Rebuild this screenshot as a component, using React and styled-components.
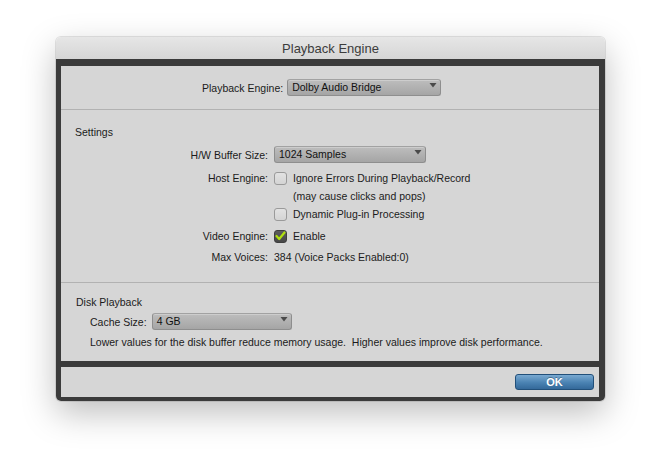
import React from 'react';
import styled, { createGlobalStyle } from 'styled-components';

const GlobalStyle = createGlobalStyle`
  html, body {
    margin: 0;
    padding: 0;
    background: #ffffff;
  }

  body {
    font-family: "Liberation Sans", Arial, sans-serif;
    font-size: 10.5px;
    color: #1b1b1b;
  }
`;

const Page = styled.div`
  width: 662px;
  height: 476px;
  padding: 37px 0 0 56px;
  box-sizing: border-box;
`;

const Window = styled.div`
  width: 549px;
  border-radius: 5px;
  overflow: hidden;
  box-shadow: 0 12px 34px rgba(0, 0, 0, 0.26), 0 0 0 1px rgba(0, 0, 0, 0.1);
`;

const TitleBar = styled.div`
  height: 22px;
  display: flex;
  align-items: center;
  justify-content: center;
  background: linear-gradient(#e6e6e6, #d6d6d6);
  font-size: 13px;
  color: #3c3c3c;
`;

const Frame = styled.div`
  background: #3b3b3b;
  padding: 7px 6px 4px 5px;
  display: flex;
  flex-direction: column;
  gap: 6px;
`;

const Panel = styled.div`
  background: #d6d6d6;
  height: ${(p) => p.$height}px;
  box-sizing: border-box;
`;

const Section = styled.div`
  padding: ${(p) => p.$pad};
  border-bottom: ${(p) => (p.$divider ? '1px solid #b2b2b2' : 'none')};
`;

const EngineRow = styled.div`
  display: flex;
  align-items: center;
  gap: 4px;
  padding-left: 141px;
  height: 17px;
`;

const SectionTitle = styled.div`
  line-height: 14px;
  height: 14px;
  padding-left: ${(p) => p.$indent || 0}px;
`;

const FieldRow = styled.div`
  display: grid;
  grid-template-columns: 207px 1fr;
  column-gap: 6px;
  align-items: center;
  height: ${(p) => p.$h || 18}px;
  margin-top: ${(p) => p.$mt || 0}px;
`;

const Label = styled.span`
  text-align: right;
  white-space: nowrap;
`;

const Control = styled.div`
  display: flex;
  align-items: center;
  gap: 6px;
  padding-left: ${(p) => p.$indent || 0}px;
  white-space: nowrap;
`;

const Select = styled.div`
  width: ${(p) => p.$w}px;
  height: 17px;
  box-sizing: border-box;
  display: flex;
  justify-content: space-between;
  align-items: flex-start;
  padding: 0 3px 0 4px;
  border: 1px solid #8e8e8e;
  border-top-color: #a2a2a2;
  border-radius: 3px;
  background: linear-gradient(#bdbdbd, #a5a5a5);
  box-shadow: inset 0 1px 0 rgba(255, 255, 255, 0.25);
  color: #111;

  span {
    line-height: 15px;
  }

  svg {
    margin-top: 3px;
  }
`;

const Box = styled.div`
  width: 13px;
  height: 13px;
  box-sizing: border-box;
  border-radius: 3px;
  border: 1px solid ${(p) => (p.$checked ? '#3e3e3e' : '#9a9a9a')};
  background: ${(p) => (p.$checked ? 'linear-gradient(#5d5d5d, #474747)' : 'linear-gradient(#e2e2e2, #d4d4d4)')};
  display: flex;
  align-items: center;
  justify-content: center;
  flex-shrink: 0;
`;

const CacheRow = styled.div`
  display: flex;
  align-items: center;
  gap: 5px;
  height: 17px;
  margin: 4px 0 0 14px;
`;

const Note = styled.div`
  line-height: 14px;
  margin: 5px 0 0 14px;
  white-space: nowrap;
`;

const Footer = styled.div`
  height: 30px;
  display: flex;
  align-items: center;
  justify-content: flex-end;
  padding-right: 5px;
  background: #d6d6d6;
`;

const OkButton = styled.button`
  width: 79px;
  height: 16px;
  padding: 0;
  margin-top: -1px;
  border: 1px solid #22507a;
  border-radius: 3px;
  background: linear-gradient(#79a9d1, #4a82b2 55%, #34699a);
  color: #fff;
  font-family: "Liberation Sans", Arial, sans-serif;
  font-size: 11px;
  font-weight: bold;
  text-shadow: 0 -1px 0 rgba(0, 0, 0, 0.3);
`;

const Arrow = () => (
  <svg width="8" height="5" viewBox="0 0 8 5">
    <path d="M0.5 0 H7.5 L4 4.5 Z" fill="#4a4a4a" />
  </svg>
);

const Dropdown = ({ width, value }) => (
  <Select $w={width}>
    <span>{value}</span>
    <Arrow />
  </Select>
);

const Checkbox = ({ checked }) => (
  <Box $checked={checked}>
    {checked && (
      <svg width="11" height="10" viewBox="0 0 11 10">
        <path d="M1.5 5 L4.2 8 L9.5 1.5" fill="none" stroke="#b0e00e" strokeWidth="2.2" strokeLinecap="round" strokeLinejoin="round" />
      </svg>
    )}
  </Box>
);

export default function App() {
  return (
    <Page>
      <GlobalStyle />
      <Window>
        <TitleBar>Playback Engine</TitleBar>
        <Frame>
          <Panel $height={295}>
            <Section $pad="13px 0" $divider>
              <EngineRow>
                <span>Playback Engine:</span>
                <Dropdown width={154} value="Dolby Audio Bridge" />
              </EngineRow>
            </Section>
            <Section $pad="15px 0 16px 0" $divider>
              <SectionTitle $indent={14}>Settings</SectionTitle>
              <FieldRow $h={17} $mt={7}>
                <Label>H/W Buffer Size:</Label>
                <Control>
                  <Dropdown width={152} value="1024 Samples" />
                </Control>
              </FieldRow>
              <FieldRow $mt={6}>
                <Label>Host Engine:</Label>
                <Control>
                  <Checkbox />
                  <span>Ignore Errors During Playback/Record</span>
                </Control>
              </FieldRow>
              <FieldRow>
                <Label />
                <Control $indent={19}>(may cause clicks and pops)</Control>
              </FieldRow>
              <FieldRow>
                <Label />
                <Control>
                  <Checkbox />
                  <span>Dynamic Plug-in Processing</span>
                </Control>
              </FieldRow>
              <FieldRow $mt={4}>
                <Label>Video Engine:</Label>
                <Control>
                  <Checkbox checked />
                  <span>Enable</span>
                </Control>
              </FieldRow>
              <FieldRow $mt={3}>
                <Label>Max Voices:</Label>
                <Control>384 (Voice Packs Enabled:0)</Control>
              </FieldRow>
            </Section>
            <Section $pad="12px 0 12px 15px">
              <SectionTitle>Disk Playback</SectionTitle>
              <CacheRow>
                <span>Cache Size:</span>
                <Dropdown width={140} value="4 GB" />
              </CacheRow>
              <Note>Lower values for the disk buffer reduce memory usage.&nbsp; Higher values improve disk performance.</Note>
            </Section>
          </Panel>
          <Footer>
            <OkButton>OK</OkButton>
          </Footer>
        </Frame>
      </Window>
    </Page>
  );
}
